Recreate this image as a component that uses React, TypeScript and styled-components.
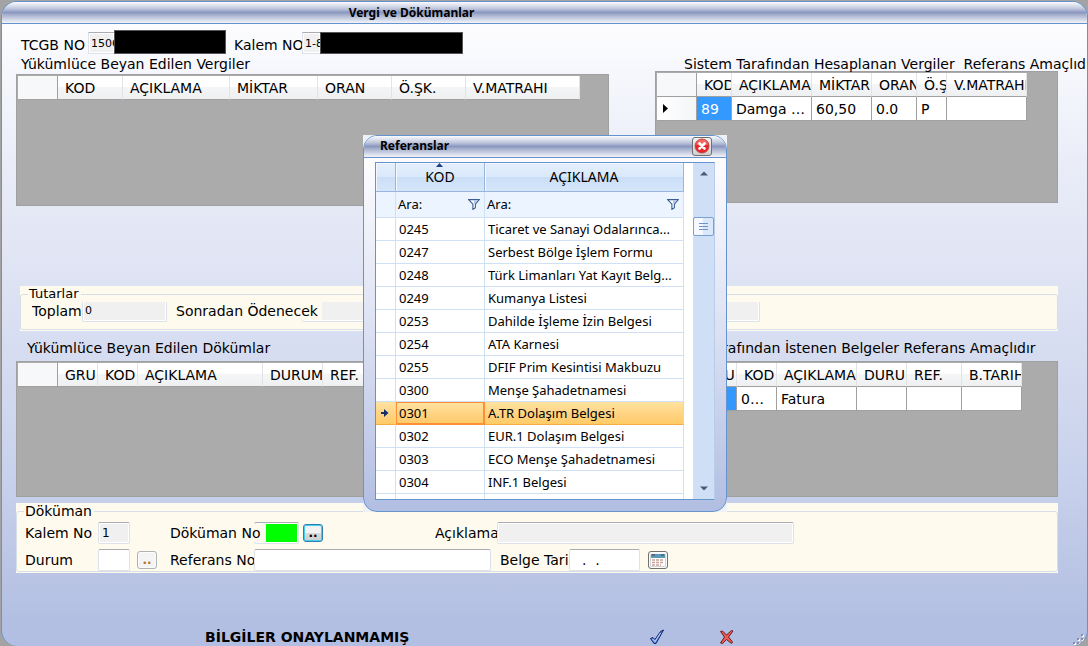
import React from 'react';
import styled, { createGlobalStyle, css } from 'styled-components';

const wide = '"DejaVu Sans", Verdana, sans-serif';
const ui = '"Noto Sans", "Segoe UI", sans-serif';
const blue = '#6593cf';
const cream = '#fffaee';

const GlobalStyle = createGlobalStyle`
  *, *::before, *::after { box-sizing: border-box; }
  body { margin: 0; background: #a3a3a3; overflow: hidden; }
  input, button { font: inherit; color: inherit; margin: 0; }
`;

const Page = styled.div`
  min-height: 100vh;
  padding: 1px 0 0 1px;
  display: flex;
  font: 14px/18px ${wide};
  color: #000;
`;

const Window = styled.main`
  flex: 1;
  min-width: 0;
  display: flex;
  flex-direction: column;
  border: 1px solid ${blue};
  border-bottom: 0;
  border-radius: 16px;
  overflow: hidden;
  background: linear-gradient(#fdfdff 20px, #eaedf8 160px, #dde2f3 290px, #c9d2ec 470px, #b3bfe2 620px);
`;

const titleBar = css`
  display: flex;
  align-items: center;
  border-bottom: 1px solid ${blue};
  background: linear-gradient(#fafbfd 0, #c3cadf 30%, #8a97bf 50%, #aeb7d2 65%, #f3f4f9 100%);
  font: bold 12px/20px ${ui};
`;

const WindowTitle = styled.h1`
  ${titleBar}
  justify-content: center;
  height: 22px;
  margin: 0;
  padding-right: 266px;
`;

const Body = styled.div`
  flex: 1;
  display: flex;
  flex-direction: column;
  padding: 5px 29px 0 14px;
`;

const IdRow = styled.div`
  display: flex;
  align-items: flex-end;
  height: 25px;
  padding-left: 5px;
`;

const IdLabel = styled.label<{ $width: number }>`
  width: ${p => p.$width}px;
  white-space: nowrap;
`;

const Redacted = styled.span<{ $width: number }>`
  width: ${p => p.$width}px;
  height: ${p => (p.$width > 120 ? 22 : 24)}px;
  margin-right: 8px;
  background: #000;
  border: 1px solid #555;
`;

const Field = styled.input<{ $width: number; $pull?: number; $fill?: string; $pad?: number; $size?: number }>`
  width: ${p => p.$width}px;
  height: 22px;
  flex: none;
  margin-left: ${p => -(p.$pull ?? 0)}px;
  padding: 0 0 0 ${p => p.$pad ?? 2}px;
  border: 1px solid #dde2ea;
  border-top-color: #ababb3;
  border-radius: 2px;
  outline: 0;
  font-size: ${p => p.$size ?? 11}px;
  white-space: pre;
  background: ${p => p.$fill ?? '#fff'};
  background-clip: padding-box;
  box-shadow: inset 0 0 0 1px #fff;
`;

const ClippedField = styled(Field)`
  border-right: 0;
  border-radius: 0;
`;

const Columns = styled.div`
  display: grid;
  grid-template-columns: 593fr 403fr;
  column-gap: 46px;
  align-items: start;
`;

const Section = styled.section`
  min-width: 0;
`;

const Caption = styled.h2<{ $indent: number; $height: number; $top?: number }>`
  height: ${p => p.$height}px;
  margin: 0;
  padding: ${p => p.$top ?? 0}px 0 0 ${p => p.$indent}px;
  font-size: 14px;
  font-weight: normal;
  line-height: 18px;
  white-space: nowrap;
`;

const GridBox = styled.div<{ $height: number }>`
  height: ${p => p.$height}px;
  padding: 1px;
  border: 1px solid #a0a0a0;
  background: #ababab;
  overflow: hidden;
`;

const Table = styled.table`
  table-layout: fixed;
  width: 0;
  border-collapse: separate;
  border-spacing: 0;
`;

const HeadCell = styled.th`
  height: 24px;
  padding: 0 0 0 7px;
  overflow: hidden;
  text-align: left;
  font-weight: normal;
  line-height: 22px;
  white-space: nowrap;
  border-right: 1px solid #e2e3e6;
  border-bottom: 1px solid #a0a0a0;
  background: linear-gradient(#fff 45%, #f4f5f7 50%, #eff0f2);
  &:first-child { border-right-color: #a0a0a0; background: #f7f8fa; }
`;

const Cell = styled.td<{ $selected?: boolean }>`
  height: 24px;
  padding: 0 4px;
  overflow: hidden;
  text-overflow: ellipsis;
  line-height: 22px;
  white-space: nowrap;
  border-right: 1px solid #a0a0a0;
  border-bottom: 1px solid #a0a0a0;
  color: ${p => (p.$selected ? '#fff' : '#000')};
  background: ${p => (p.$selected ? '#3399ff' : '#fff')};
`;

const RowMarker = styled(Cell)`
  padding-left: 6px;
  background: linear-gradient(90deg, #fff, #f4f5f7);
  svg { display: block; }
`;

const Panel = styled.div<{ $indent?: number; $top: number }>`
  margin: ${p => p.$top}px 0 0 ${p => p.$indent ?? 0}px;
  padding-bottom: 1px;
  background: ${cream};
`;

const Group = styled.fieldset<{ $height: number; $size?: number }>`
  height: ${p => p.$height}px;
  min-width: 0;
  margin: 0;
  padding: 0 0 0 8px;
  border: 1px solid #d5dfe5;
  border-radius: 3px;
  overflow: hidden;
  legend { margin-left: -1px; padding: 0 2px 0 1px; font-size: ${p => p.$size ?? 14}px; line-height: 16px; }
`;

const Line = styled.div<{ $height: number }>`
  display: flex;
  align-items: center;
  height: ${p => p.$height}px;
`;

const Label = styled.label<{ $width: number; $cover?: boolean }>`
  width: ${p => p.$width}px;
  flex: none;
  overflow: hidden;
  white-space: nowrap;
  ${p => p.$cover && css`z-index: 1; background: ${cream};`}
`;

const Gap = styled.span<{ $width: number }>`
  flex: none;
  width: ${p => p.$width}px;
`;

const SmallButton = styled.button<{ $active?: boolean }>`
  display: grid;
  place-items: center;
  flex: none;
  width: 20px;
  height: 18px;
  padding: 0;
  border: 1px solid ${p => (p.$active ? '#2c7fae' : '#adb2b5')};
  border-radius: 3px;
  font: bold 12px/12px ${wide};
  color: ${p => (p.$active ? '#000' : '#b5761f')};
  background: ${p => (p.$active ? 'linear-gradient(#f2f2f2 50%, #dbdbdb 50%, #cfcfcf)' : '#f4f4f4')};
  box-shadow: inset 0 0 0 1px ${p => (p.$active ? '#48cdf5' : '#fcfcfc')};
`;

const CalendarButton = styled(SmallButton)`
  border-color: #707070;
`;

const Footer = styled.footer`
  display: flex;
  align-items: center;
  height: 18px;
  margin: auto -27px 0 0;
  padding-left: 189px;
`;

const Status = styled.strong`
  width: 444px;
  font-size: 14px;
`;

const IconButton = styled.button`
  width: 16px;
  height: 16px;
  margin-right: 54px;
  padding: 0;
  border: 0;
  background: none;
  svg { display: block; }
`;

const Grip = styled.svg`
  margin: 6px 0 0 auto;
`;

const Overlay = styled.div`
  position: fixed;
  inset: 0;
  display: grid;
  place-items: center;
  padding-left: 2px;
`;

const DialogFrame = styled.div`
  width: 364px;
  background: #eef1f6;
  font: 13px/18px ${ui};
`;

const Dialog = styled.div`
  border: 1px solid ${blue};
  border-radius: 14px;
  overflow: hidden;
  background: linear-gradient(#fdfdff 20px, #dde2f3 190px, #b3bfe2 370px);
`;

const DialogTitle = styled.div`
  ${titleBar}
  justify-content: space-between;
  height: 22px;
  padding: 0 14px 0 16px;
`;

const CloseButton = styled.button`
  display: grid;
  place-items: center;
  width: 20px;
  height: 19px;
  padding: 0;
  border: 1px solid #707070;
  border-radius: 3px;
  background: linear-gradient(#f2f2f2, #cfcfcf);
`;

const Picker = styled.div`
  display: flex;
  height: 338px;
  margin: 4px 11px 11px;
  border: 1px solid ${blue};
  border-right-color: #b9cdea;
  background: #fff;
  overflow: hidden;
`;

const PickTable = styled.table`
  flex: none;
  table-layout: fixed;
  width: 308px;
  border-collapse: separate;
  border-spacing: 0;
`;

const PickHead = styled.th`
  height: 29px;
  padding: 0;
  position: relative;
  font-size: 14px;
  font-weight: normal;
  border-right: 1px solid #9ab6dc;
  border-bottom: 1px solid #9ab6dc;
  background: linear-gradient(#e4effc, #d9e8fb 50%, #cadef7 50%, #d6e6fa);
  box-shadow: inset 1px 1px 0 #f4f8fe;
`;

const SortMark = styled.svg`
  position: absolute;
  top: 0;
  left: 50%;
  margin-left: -4px;
`;

const FilterCell = styled.td`
  height: 26px;
  padding: 0 4px 0 2px;
  border-right: 1px solid #d0e0f5;
  border-bottom: 1px solid #d0e0f5;
  background: #ebf4ff;
  div { display: flex; align-items: center; justify-content: space-between; }
`;

const PickCell = styled.td<{ $current?: boolean }>`
  height: 23px;
  padding: 0 3px;
  overflow: hidden;
  line-height: 20px;
  white-space: nowrap;
  border-right: 1px solid #d0e0f5;
  border-bottom: 1px solid #d0e0f5;
  ${p =>
    p.$current &&
    css`
      border-right-color: #ffd57a;
      border-bottom-color: #f5ad45;
      background: linear-gradient(#ffe3a1, #ffd280 60%, #ffcb66);
      &:nth-child(2) { box-shadow: inset 0 0 0 1px #ff8f35; border-color: #ff8f35; }
    `}
  svg { display: block; margin-left: 2px; }
`;

const ScrollBar = styled.div`
  display: flex;
  flex-direction: column;
  align-items: center;
  width: 21px;
  margin-left: auto;
  padding: 8px 0;
  background: #cfdff5;
`;

const ScrollThumb = styled.button`
  display: grid;
  place-items: center;
  width: 21px;
  height: 19px;
  margin: 41px 0 auto;
  padding: 0;
  border: 1px solid #7b9fcf;
  border-radius: 2px;
  background: linear-gradient(90deg, #f5f9ff 50%, #dbe8fa 50%);
`;

type Col = [string, number];
type GridProps = { cols: Col[]; rows?: string[][]; height: number };

function DataGrid({ cols, rows = [], height }: GridProps) {
  return (
    <GridBox $height={height}>
      <Table>
        <colgroup>
          <col width={40} />
          {cols.map(([name, width]) => <col key={name} width={width} />)}
        </colgroup>
        <thead>
          <tr>
            <HeadCell />
            {cols.map(([name]) => <HeadCell key={name}>{name}</HeadCell>)}
          </tr>
        </thead>
        <tbody>
          {rows.map((row, r) => (
            <tr key={r}>
              <RowMarker>
                <svg width="5" height="9" viewBox="0 0 5 9"><path d="M0 0L5 4.500L0 9Z" /></svg>
              </RowMarker>
              {row.map((text, c) => <Cell key={c} $selected={c === 0}>{text}</Cell>)}
            </tr>
          ))}
        </tbody>
      </Table>
    </GridBox>
  );
}

const Funnel = () => (
  <svg width="12" height="11" viewBox="0 0 12 11">
    <path d="M.7.600h10.600L7.400 5.200v3.600L4.900 10.400V5.200Z" fill="#fff" stroke="#3b5c95" strokeWidth="1.100" />
    <path d="M6 5.500L9.500 1.500h-3.500Z" fill="#a9c3e8" />
  </svg>
);

const references: [string, string][] = [
  ['0245', 'Ticaret ve Sanayi Odalarınca...'],
  ['0247', 'Serbest Bölge İşlem Formu'],
  ['0248', 'Türk Limanları Yat Kayıt Belg...'],
  ['0249', 'Kumanya Listesi'],
  ['0253', 'Dahilde İşleme İzin Belgesi'],
  ['0254', 'ATA Karnesi'],
  ['0255', 'DFIF Prim Kesintisi Makbuzu'],
  ['0300', 'Menşe Şahadetnamesi'],
  ['0301', 'A.TR Dolaşım Belgesi'],
  ['0302', 'EUR.1 Dolaşım Belgesi'],
  ['0303', 'ECO Menşe Şahadetnamesi'],
  ['0304', 'INF.1 Belgesi'],
  ['', ''],
];

function ReferenceDialog() {
  return (
    <Overlay>
      <DialogFrame role="dialog" aria-label="Referanslar">
        <Dialog>
          <DialogTitle>
            Referanslar
            <CloseButton aria-label="Kapat">
              <svg width="16" height="16" viewBox="0 0 16 16">
                <circle cx="8" cy="8" r="7" fill="#e8262a" stroke="#c2474a" />
                <path d="M2 6.500a6.100 6.100 0 0 1 12 0Q8 9 2 6.500Z" fill="#f06a62" />
                <path d="M5.500 5.500l5 5M10.500 5.500l-5 5" stroke="#fff" strokeWidth="2.600" strokeLinecap="round" />
              </svg>
            </CloseButton>
          </DialogTitle>
          <Picker>
            <PickTable>
              <colgroup>
                <col width={20} />
                <col width={89} />
                <col width={199} />
              </colgroup>
              <thead>
                <tr>
                  <PickHead />
                  <PickHead>
                    <SortMark width="7" height="4" viewBox="0 0 7 4"><path d="M0 4L3.500 0L7 4Z" fill="#1d3f85" /></SortMark>
                    KOD
                  </PickHead>
                  <PickHead>AÇIKLAMA</PickHead>
                </tr>
              </thead>
              <tbody>
                <tr>
                  <FilterCell />
                  <FilterCell><div>Ara:<Funnel /></div></FilterCell>
                  <FilterCell><div>Ara:<Funnel /></div></FilterCell>
                </tr>
                {references.map(([code, name]) => {
                  const current = code === '0301';
                  return (
                    <tr key={code}>
                      <PickCell $current={current}>
                        {current && (
                          <svg width="8" height="8" viewBox="0 0 8 8"><path d="M0 3h3V0L7.500 4L3 8V5H0Z" fill="#14306e" /></svg>
                        )}
                      </PickCell>
                      <PickCell $current={current}>{code}</PickCell>
                      <PickCell $current={current}>{name}</PickCell>
                    </tr>
                  );
                })}
              </tbody>
            </PickTable>
            <ScrollBar>
              <svg width="8" height="5" viewBox="0 0 8 5"><path d="M0 4.500L4 .5L8 4.500Z" fill="#4a5a78" /></svg>
              <ScrollThumb aria-label="Kaydır">
                <svg width="9" height="7" viewBox="0 0 9 7"><path d="M0 .5h9M0 3.500h9M0 6.500h9" stroke="#6f93c8" /></svg>
              </ScrollThumb>
              <svg width="8" height="5" viewBox="0 0 8 5"><path d="M0 .5L4 4.500L8 .5Z" fill="#4a5a78" /></svg>
            </ScrollBar>
          </Picker>
        </Dialog>
      </DialogFrame>
    </Overlay>
  );
}

export default function App() {
  return (
    <>
      <GlobalStyle />
      <Page>
        <Window>
          <WindowTitle>Vergi ve Dökümanlar</WindowTitle>
          <Body>
            <IdRow>
              <IdLabel htmlFor="tcgb" $width={67}>TCGB NO</IdLabel>
              <ClippedField id="tcgb" $width={26} $fill="#f0f0f0" defaultValue="1506" readOnly />
              <Redacted $width={112} />
              <IdLabel htmlFor="kalem" $width={68}>Kalem NO</IdLabel>
              <ClippedField id="kalem" $width={18} $fill="#f0f0f0" defaultValue="1-8" readOnly />
              <Redacted $width={143} />
            </IdRow>

            <Columns>
              <Section>
                <Caption $indent={5} $top={1} $height={20}>Yükümlüce Beyan Edilen Vergiler</Caption>
                <DataGrid
                  height={132}
                  cols={[['KOD', 65], ['AÇIKLAMA', 107], ['MİKTAR', 88], ['ORAN', 74], ['Ö.ŞK.', 74], ['V.MATRAHI', 114]]}
                />
              </Section>
              <Section>
                <Caption $indent={29} $top={1} $height={17}>Sistem Tarafından Hesaplanan Vergiler&nbsp; Referans Amaçlıdır</Caption>
                <DataGrid
                  height={132}
                  cols={[['KOD', 35], ['AÇIKLAMA', 80], ['MİKTAR', 60], ['ORAN', 45], ['Ö.ŞK.', 30], ['V.MATRAHI', 80]]}
                  rows={[['89', 'Damga Vergisi', '60,50', '0.0', 'P', '']]}
                />
              </Section>
            </Columns>

            <Panel $top={80} $indent={4}>
              <Group $height={44} $size={13}>
                <legend>Tutarlar</legend>
                <Line $height={17}>
                  <Gap $width={3} />
                  <Label htmlFor="toplam" $width={50}>Toplam</Label>
                  <Field id="toplam" $width={85} $fill="#f0f0f0" defaultValue="0" readOnly />
                  <Gap $width={9} />
                  <Label htmlFor="sonradan" $width={146} $cover>Sonradan Ödenecek</Label>
                  <Field id="sonradan" $width={85} $pull={20} $fill="#f0f0f0" readOnly />
                  <Gap $width={288} />
                  <Field aria-label="Tutar" $width={85} $fill="#f0f0f0" readOnly />
                </Line>
              </Group>
            </Panel>

            <Columns>
              <Section>
                <Caption $indent={11} $top={8} $height={30}>Yükümlüce Beyan Edilen Dökümlar</Caption>
                <DataGrid
                  height={136}
                  cols={[['GRU', 40], ['KOD', 40], ['AÇIKLAMA', 125], ['DURUM', 60], ['REF.', 80]]}
                />
              </Section>
              <Section>
                <Caption $indent={0} $top={8} $height={30}>Sistem Tarafından İstenen Belgeler Referans Amaçlıdır</Caption>
                <DataGrid
                  height={136}
                  cols={[['GRU', 40], ['KOD', 40], ['AÇIKLAMA', 80], ['DURUM', 50], ['REF.', 55], ['B.TARIHI', 60]]}
                  rows={[['', '0100', 'Fatura', '', '', '']]}
                />
              </Section>
            </Columns>

            <Panel $top={6}>
              <Group $height={69}>
                <legend>Döküman</legend>
                <Line $height={28}>
                  <Label htmlFor="kalemNo" $width={73}>Kalem No</Label>
                  <Field id="kalemNo" $width={32} $size={12} $pad={3} $fill="#f0f0f0" defaultValue="1" readOnly />
                  <Gap $width={40} />
                  <Label htmlFor="dokuman" $width={96} $cover>Döküman No</Label>
                  <Field id="dokuman" $width={45} $pull={12} $fill="#00ff00" />
                  <Gap $width={4} />
                  <SmallButton $active>..</SmallButton>
                  <Gap $width={112} />
                  <Label htmlFor="aciklama" $width={62}>Açıklama</Label>
                  <Field id="aciklama" $width={297} $fill="#f0f0f0" readOnly />
                </Line>
                <Line $height={25}>
                  <Label htmlFor="durum" $width={73}>Durum</Label>
                  <Field id="durum" $width={32} />
                  <Gap $width={7} />
                  <SmallButton>..</SmallButton>
                  <Gap $width={13} />
                  <Label htmlFor="referans" $width={84}>Referans No</Label>
                  <Field id="referans" $width={237} />
                  <Gap $width={9} />
                  <Label htmlFor="tarih" $width={69}>Belge Tarihi</Label>
                  <Field id="tarih" $width={71} $pad={12} $size={14} defaultValue=".  ." />
                  <Gap $width={8} />
                  <CalendarButton aria-label="Takvim">
                    <svg width="16" height="14" viewBox="0 0 16 14">
                      <path d="M.5 1.500h15v12H.5Z" fill="#fff" stroke="#d5d5d5" />
                      <path d="M1 1h14v4H1Z" fill="#5b9bb5" />
                      <path d="M2 2h3M11 2h3" stroke="#444" strokeWidth="1" />
                      <path d="M2 7h12M2 9.500h12M2 12h9" stroke="#c9a299" strokeWidth="1.500" strokeDasharray="3 1" />
                    </svg>
                  </CalendarButton>
                </Line>
              </Group>
            </Panel>

            <Footer>
              <Status>BİLGİLER ONAYLANMAMIŞ</Status>
              <IconButton aria-label="Onayla">
                <svg width="16" height="16" viewBox="0 0 16 16">
                  <path d="M1.500 9.500L4 8.500L6 10.500L11.500 2.500L14.500 1L7 14.500H5Z" fill="#5b8be8" stroke="#14245e" />
                  <path d="M3.500 10L6 12.500L11.500 4" fill="none" stroke="#c9dcff" />
                </svg>
              </IconButton>
              <IconButton aria-label="İptal">
                <svg width="16" height="16" viewBox="0 0 16 16">
                  <path d="M1.500 2.500L3.500 2L7.500 6L12.500 1.500L14 2L9.500 8L13.500 13L12.500 14.500L7.500 10.500L3.500 14.500L1.500 14L5.500 8Z" fill="#ee5a55" stroke="#6b1c1c" />
                </svg>
              </IconButton>
              <Grip width="12" height="12" viewBox="0 0 12 12">
                <path d="M9 1h2v2H9ZM5 5h2v2H5ZM9 5h2v2H9ZM1 9h2v2H1ZM5 9h2v2H5ZM9 9h2v2H9Z" fill="#fff" />
                <path d="M8 0h2v2H8ZM4 4h2v2H4ZM8 4h2v2H8ZM0 8h2v2H0ZM4 8h2v2H4ZM8 8h2v2H8Z" fill="#8f8f9b" />
              </Grip>
            </Footer>
          </Body>
        </Window>
      </Page>
      <ReferenceDialog />
    </>
  );
}
